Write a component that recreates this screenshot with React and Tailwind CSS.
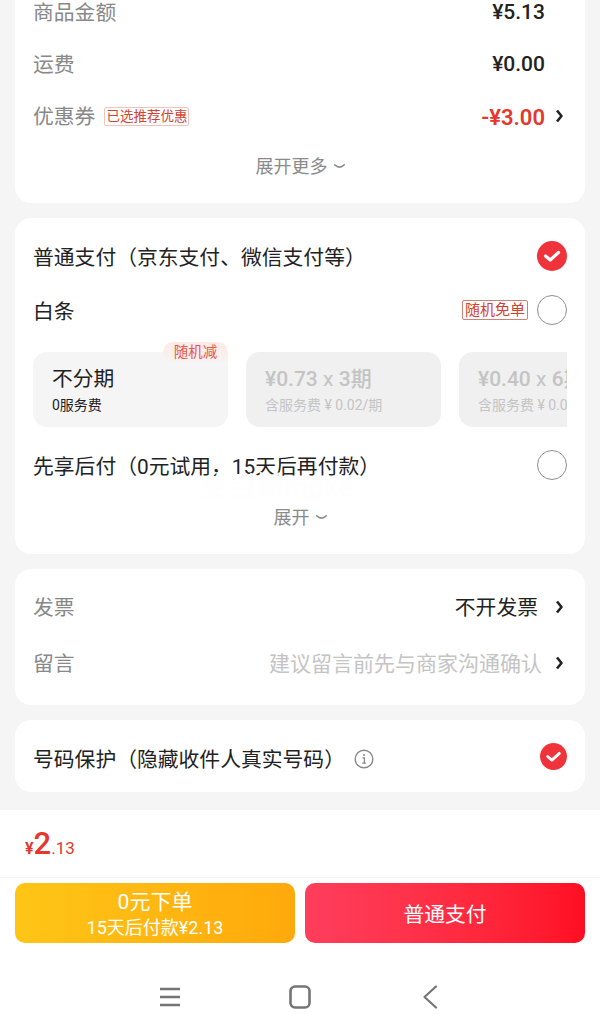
const font = { cjk: 'font-["Roboto","Noto_Sans_CJK_SC","Noto_Sans",sans-serif]' };

function Chevron({ className = '' }) {
  return (
    <svg viewBox="0 0 9 14" className={`w-[9px] h-[14px] shrink-0 ${className}`} fill="none">
      <path d="M2 1.5 L6.5 7 L2 12.5" stroke="#222" strokeWidth="2.6" strokeLinejoin="round" />
    </svg>
  );
}

function SmallDown() {
  return (
    <svg viewBox="0 0 14 8" className="w-[13px] h-[7px] ml-[5px]" fill="none">
      <path d="M1.5 2 Q7 7.5 12.5 2" stroke="#8a8a8a" strokeWidth="1.8" strokeLinecap="round" />
    </svg>
  );
}

function Checked({ size = 'w-[30px] h-[30px]' }) {
  return (
    <svg viewBox="0 0 30 30" className={`${size} shrink-0`}>
      <circle cx="15" cy="15" r="15" fill="#f0323a" />
      <path d="M8.5 15 L13.2 19 L21.5 11.5" fill="none" stroke="#fff" strokeWidth="3.2" strokeLinecap="round" strokeLinejoin="round" />
    </svg>
  );
}

function Radio() {
  return <div className="w-[30px] h-[30px] rounded-full border border-[#8f8f8f] shrink-0" />;
}

function Card({ children, className = '' }) {
  return <div className={`bg-white rounded-[16px] mx-[15px] pl-[18px] pr-[18px] ${className}`}>{children}</div>;
}

function Amount({ label, value }) {
  return (
    <div className="flex items-center justify-between h-[52px] pr-[22px]">
      <span className="text-[#888] pt-[6px]">{label}</span>
      <span className="text-[#222] text-[21px] font-medium pt-[4px]">{value}</span>
    </div>
  );
}

function Tile({ price, unit, note }) {
  return (
    <div className="w-[195px] h-[75px] shrink-0 rounded-[14px] bg-[#f0f0f0] pl-[19px] pt-[13px] text-[#c4c4c4] overflow-hidden">
      <div className="text-[21px] leading-[28px] whitespace-nowrap font-medium">
        {price} <span className="font-normal">x</span> {unit}
      </div>
      <div className="text-[14px] leading-[22px] mt-[1px] whitespace-nowrap">{note}</div>
    </div>
  );
}

export default function App() {
  return (
    <div className={`relative w-[600px] h-[1033px] overflow-hidden bg-[#f5f5f5] text-[20.8px] ${font.cjk}`}>
      <Card className="-mt-[15px] h-[218px]">
        <Amount label="商品金额" value="¥5.13" />
        <Amount label="运费" value="¥0.00" />
        <div className="flex items-center h-[52px]">
          <span className="text-[#888] pt-[6px]">优惠券</span>
          <span className="ml-[9px] mt-[2px] border border-[#eec4bb] rounded-[2px] px-[1px] text-[13.5px] leading-[17px] text-[#cf4535] whitespace-nowrap">
            已选推荐优惠
          </span>
          <span className="ml-auto text-[#e5372b] text-[22px] font-semibold pt-[4px]">-¥3.00</span>
          <Chevron className="ml-[10px] mr-[3px] mt-[2px]" />
        </div>
        <div className="flex items-center justify-center h-[48px] pt-[3px] text-[18px] text-[#8a8a8a] -mr-[1px]">
          展开更多
          <SmallDown />
        </div>
      </Card>

      <Card className="mt-[15px] h-[336px]">
        <div className="flex items-center justify-between pt-[23px] h-[53px] text-[#222]">
          <span className="pt-[5px]">普通支付（京东支付、微信支付等）</span>
          <Checked />
        </div>
        <div className="flex items-center mt-[24px] h-[30px] text-[#222]">
          <span className="pt-[5px]">白条</span>
          <span className="ml-auto mr-[9px] border border-[#cf8077] rounded-[2px] px-[2px] text-[15px] leading-[18px] text-[#d5402f]">
            随机免单
          </span>
          <Radio />
        </div>
        <div className="relative mt-[27px] h-[75px]">
          <div className="flex gap-[18px] overflow-hidden w-[534px]">
            <div className="w-[195px] h-[75px] shrink-0 rounded-[14px] bg-[#f5f5f5] pl-[19px] pt-[13px] text-[#222]">
              <div className="text-[20.8px] leading-[28px]">不分期</div>
              <div className="text-[14px] leading-[22px] mt-[1px]">0服务费</div>
            </div>
            <Tile price="¥0.73" unit="3期" note="含服务费 ¥ 0.02/期" />
            <Tile price="¥0.40" unit="6期" note="含服务费 ¥ 0.02/期" />
          </div>
          <span className="absolute left-[130px] -top-[10px] w-[65px] h-[20px] pt-[1px] rounded-t-[10px] rounded-bl-[10px] bg-gradient-to-b from-[#fde9e6] to-[#f7f3f2] text-center text-[14.5px] leading-[20px] text-[#e5574a]">
            随机减
          </span>
        </div>
        <div className="flex items-center justify-between mt-[23px] h-[30px] text-[#222]">
          <span className="pt-[6px]">先享后付（0元试用，15天后再付款）</span>
          <Radio />
        </div>
        <div className="flex items-center justify-center mt-[23px] h-[26px] pt-[3px] text-[18px] text-[#8a8a8a] -mr-[1px]">
          展开
          <SmallDown />
        </div>
      </Card>

      <Card className="mt-[15px] h-[136px] pt-[10px]">
        <div className="flex items-center h-[56px]">
          <span className="text-[#888] pt-[4px]">发票</span>
          <span className="ml-auto text-[#222] pt-[4px]">不开发票</span>
          <Chevron className="ml-[17px] mr-[3px]" />
        </div>
        <div className="flex items-center h-[56px]">
          <span className="text-[#888] pt-[4px]">留言</span>
          <span className="ml-auto text-[21px] text-[#c4c4c4] pt-[4px]">建议留言前先与商家沟通确认</span>
          <Chevron className="ml-[13px] mr-[3px]" />
        </div>
      </Card>

      <Card className="mt-[15px] h-[72px] flex items-center">
        <span className="text-[#222] pt-[10px]">号码保护（隐藏收件人真实号码）</span>
        <svg viewBox="0 0 20 20" className="w-[20px] h-[20px] ml-[9px] mt-[6px]" fill="none">
          <circle cx="10" cy="10" r="8.8" stroke="#8a8a8a" strokeWidth="1.4" />
          <path d="M8.4 8.8 H10.4 V14.2 M8.2 14.2 H12" stroke="#8a8a8a" strokeWidth="1.3" />
          <circle cx="10" cy="6" r="1" fill="#8a8a8a" />
        </svg>
        <Checked size="w-[27px] h-[27px] ml-auto" />
      </Card>

      <div className="absolute left-0 right-0 top-[810px] bottom-0 bg-white">
        <div className="flex items-baseline h-[68px] pl-[25px] pt-[14px] border-b border-[#f5f5f5] text-[#e5372b]">
          <span className="text-[16px] font-bold">¥</span>
          <span className="text-[31px] leading-[40px] font-medium">2</span>
          <span className="text-[17px]">.13</span>
        </div>
        <div className="flex gap-[10px] px-[15px] pt-[5px]">
          <div className="flex-1 h-[60px] pt-[3px] rounded-[10px] bg-gradient-to-r from-[#fec516] to-[#ffa90c] flex flex-col items-center justify-center text-white">
            <div className="text-[21px] leading-[26px]">0元下单</div>
            <div className="text-[18px] leading-[25px]">15天后付款¥2.13</div>
          </div>
          <div className="flex-1 h-[60px] pt-[5px] rounded-[10px] bg-gradient-to-r from-[#fe3e5c] to-[#ff0d22] flex items-center justify-center text-white">
            普通支付
          </div>
        </div>
        <div className="flex items-center pt-[42px] pl-[159px]">
          <svg viewBox="0 0 22 20" className="w-[22px] h-[20px]" fill="none">
            <path d="M1 2 H21 M1 10 H21 M1 18 H21" stroke="#757575" strokeWidth="2.4" />
          </svg>
          <svg viewBox="0 0 22 24" className="w-[22px] h-[24px] ml-[108px]" fill="none">
            <rect x="1.5" y="1.5" width="19" height="21" rx="4.5" stroke="#757575" strokeWidth="2.6" />
          </svg>
          <svg viewBox="0 0 16 24" className="w-[16px] h-[24px] ml-[111px]" fill="none">
            <path d="M14 1.5 L2.5 12 L14 22.5" stroke="#757575" strokeWidth="2.2" strokeLinecap="round" strokeLinejoin="round" />
          </svg>
        </div>
      </div>

      <div className="absolute left-[200px] top-[471px] text-[28px] leading-[32px] text-white/95 [text-shadow:0_0_2px_rgba(0,0,0,0.02)] whitespace-nowrap pointer-events-none">
        业当斯moke
      </div>
    </div>
  );
}
